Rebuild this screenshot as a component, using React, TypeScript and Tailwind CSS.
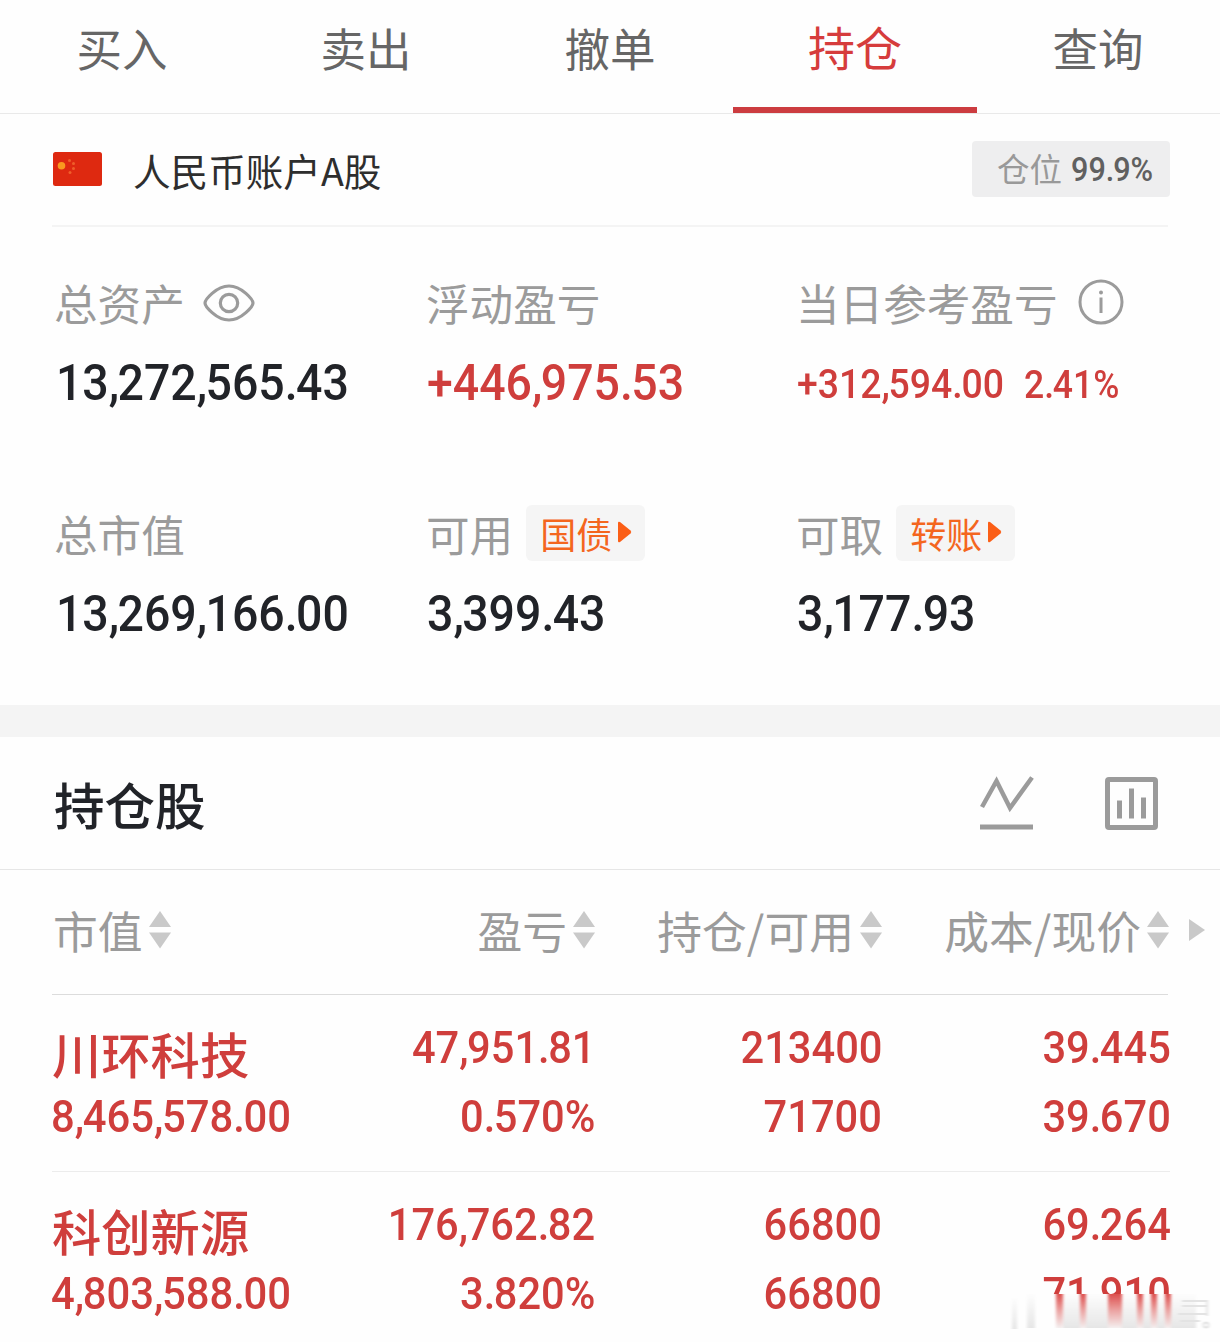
import React from 'react';
import { clsx } from 'clsx';

interface Holding {
  name: string;
  marketValue: string;
  profit: string;
  profitRate: string;
  shares: string;
  available: string;
  cost: string;
  price: string;
}

const TABS = ['买入', '卖出', '撤单', '持仓', '查询'];
const ACTIVE_TAB = '持仓';

const HOLDINGS: Holding[] = [
  {
    name: '川环科技',
    marketValue: '8,465,578.00',
    profit: '47,951.81',
    profitRate: '0.570%',
    shares: '213400',
    available: '71700',
    cost: '39.445',
    price: '39.670',
  },
  {
    name: '科创新源',
    marketValue: '4,803,588.00',
    profit: '176,762.82',
    profitRate: '3.820%',
    shares: '66800',
    available: '66800',
    cost: '69.264',
    price: '71.910',
  },
];

// Narrow DIN-like figures, with the separators pulled in
const Num: React.FC<{ children: string; className?: string }> = ({ children, className }) => (
  <span className={clsx('block w-max font-[Roboto,sans-serif] font-medium whitespace-nowrap', className)}>
    {children.split(/([.,])/).map((part, i) =>
      part === '.' || part === ',' ? (
        <span key={i} className="tracking-[-0.035em]">
          {part}
        </span>
      ) : (
        part
      )
    )}
  </span>
);

const SortIcon = () => (
  <svg className="ml-[6px] h-[38px] w-[22px] shrink-0" viewBox="0 0 22 38" fill="#c9c9c9">
    <path d="M11 0 L22 16 H0 Z" />
    <path d="M0 21.5 H22 L11 37.5 Z" />
  </svg>
);

const Flag = () => (
  <svg className="ml-px h-[34px] w-[49px] -translate-y-px" viewBox="0 0 49 34">
    <rect width="49" height="34" rx="2.500" fill="#de2910" />
    <circle cx="8.500" cy="13.800" r="3.800" fill="#f9991f" />
    <g fill="#ef5f2b">
      <circle cx="16.500" cy="8.500" r="1.500" />
      <circle cx="20.500" cy="11.500" r="1.500" />
      <circle cx="20.500" cy="16.500" r="1.500" />
      <circle cx="17" cy="20.500" r="1.500" />
    </g>
  </svg>
);

const EyeIcon = () => (
  <svg className="ml-[18px] h-[38px] w-[52px] translate-y-px" viewBox="0 0 52 38" fill="none" stroke="#9b9b9b" strokeWidth="3.200">
    <path d="M2 19 C2 16 13 2 26 2 C39 2 50 16 50 19 C50 22 39 36 26 36 C13 36 2 22 2 19 Z" />
    <circle cx="26" cy="19" r="8.700" />
  </svg>
);

const InfoIcon = () => (
  <svg className="ml-[20px] h-[46px] w-[46px]" viewBox="0 0 46 46" fill="none" stroke="#9b9b9b" strokeWidth="3">
    <circle cx="23" cy="23" r="21" />
    <path d="M23 18.500 V34" />
    <circle cx="23" cy="13.500" r="2" fill="#9b9b9b" stroke="none" />
  </svg>
);

const LinkTag: React.FC<{ label: string }> = ({ label }) => (
  <span className="ml-[13px] flex h-[56px] w-[119px] items-center rounded-[6px] bg-[#f5f5f5] pl-[14px] text-[36px] leading-[56px] text-[#f4661e]">
    {label}
    <svg className="ml-[6px] h-[22px] w-[14px] -translate-y-px" viewBox="0 0 14 22" fill="#fb5f17">
      <path d="M0 2 Q0 0 2 1 L12.500 9.500 Q14 11 12.500 12.500 L2 21 Q0 22 0 20 Z" />
    </svg>
  </span>
);

const Label: React.FC<{ text: string; children?: React.ReactNode }> = ({ text, children }) => (
  <div className="flex h-[60px] items-center text-[43.600px] leading-[60px] whitespace-nowrap text-[#9b9b9b]">
    <span className="-ml-px">{text}</span>
    {children}
  </div>
);

const big = 'mt-[21px] h-[60px] text-[50.500px] leading-[60px] origin-left scale-x-[0.920]';
const cell = 'text-[45px] leading-[60px] origin-right scale-x-[0.925]';

// Smudged strip in the corner over the last price
const Smudge = () => (
  <svg className="absolute right-0 bottom-0 h-[48px] w-[220px]" viewBox="0 0 220 48">
    <defs>
      <linearGradient id="fadeRed" x1="0" y1="0" x2="0" y2="1">
        <stop offset="0" stopColor="#dc4a48" />
        <stop offset="0.500" stopColor="#eba3a2" />
        <stop offset="1" stopColor="#f4efef" />
      </linearGradient>
      <linearGradient id="fadeGray" x1="0" y1="0" x2="0" y2="1">
        <stop offset="0" stopColor="#fdfdfd" />
        <stop offset="1" stopColor="#e6e6e6" />
      </linearGradient>
      <filter id="soft" x="-20%" y="-5%" width="140%" height="110%">
        <feGaussianBlur stdDeviation="1.400 0.300" />
      </filter>
    </defs>
    <rect width="220" height="48" fill="#fefefe" />
    <g filter="url(#soft)">
      <rect x="12" y="4" width="5" height="31" fill="url(#fadeGray)" />
      <rect x="27" y="0" width="8" height="34" fill="url(#fadeGray)" />
      <rect x="62" y="0" width="134" height="34" fill="url(#fadeGray)" />
    </g>
    <g fill="url(#fadeRed)" filter="url(#soft)">
      <rect x="56" y="-1" width="7" height="35" />
      <rect x="80" y="-1" width="6" height="35" />
      <rect x="108" y="-1" width="14" height="35" />
      <rect x="137" y="-1" width="6" height="35" />
      <rect x="151" y="-1" width="6" height="35" />
      <rect x="165" y="-1" width="6" height="35" />
    </g>
    <g stroke="#e3e3e3" strokeWidth="2" fill="none" filter="url(#soft)">
      <path d="M182 7 H206 M182 12 H206 M178 20 H206 M180 27 H200 M207 6 V22" />
      <circle cx="206" cy="31" r="2.500" />
    </g>
  </svg>
);

export default function App() {
  return (
    <div className="relative h-[1342px] w-[1220px] overflow-hidden bg-[#fefefe] font-['Noto_Sans_CJK_SC',sans-serif]">
      {/* Tabs */}
      <nav className="grid h-[114px] grid-cols-5 border-b border-[#e9e9e9]">
        {TABS.map((tab) => (
          <div
            key={tab}
            className={clsx(
              'h-[113px] text-center leading-[60px]',
              tab === ACTIVE_TAB
                ? 'translate-x-px border-b-[6px] border-[#cc3c40] pt-[16px] text-[47px] text-[#d63c3c]'
                : 'pt-[17px] text-[45.500px] text-[#666666]'
            )}
          >
            {tab}
          </div>
        ))}
      </nav>

      {/* Account */}
      <div className="mx-[52px] flex h-[113px] items-center border-b-2 border-[#f4f4f4]">
        <Flag />
        <span className="ml-[31px] text-[37.600px] leading-[56px] text-[#2e2e2e]">人民币账户A股</span>
        <div className="-mr-[2px] mb-[2px] ml-auto flex h-[56px] w-[198px] items-center rounded-[4px] bg-[#eeeeef] pl-[25px] text-[32.500px] text-[#999999]">
          仓位
          <Num className="ml-[9px] origin-left translate-y-px scale-x-[0.900] text-[34px] text-[#606060]">99.9%</Num>
        </div>
      </div>

      {/* Summary */}
      <section className="grid h-[478px] grid-cols-[372px_370px_1fr] grid-rows-[231px_1fr] pt-[45px] pl-[55px]">
        <div>
          <Label text="总资产">
            <EyeIcon />
          </Label>
          <Num className={clsx(big, 'pl-px text-[#212328]')}>13,272,565.43</Num>
        </div>
        <div>
          <Label text="浮动盈亏" />
          <Num className={clsx(big, 'text-[#cf3e3c]')}>+446,975.53</Num>
        </div>
        <div>
          <Label text="当日参考盈亏">
            <InfoIcon />
          </Label>
          <div className="mt-[23px] flex text-[#cf3e3c]">
            <Num className="origin-left scale-x-[0.935] text-[40px] leading-[60px]">+312,594.00</Num>
            <Num className="ml-[6px] origin-left scale-x-[0.935] text-[38px] leading-[60px]">2.41%</Num>
          </div>
        </div>
        <div>
          <Label text="总市值" />
          <Num className={clsx(big, 'pl-px text-[#212328]')}>13,269,166.00</Num>
        </div>
        <div>
          <Label text="可用">
            <LinkTag label="国债" />
          </Label>
          <Num className={clsx(big, 'text-[#212328]')}>3,399.43</Num>
        </div>
        <div>
          <Label text="可取">
            <LinkTag label="转账" />
          </Label>
          <Num className={clsx(big, 'text-[#212328]')}>3,177.93</Num>
        </div>
      </section>

      <div className="h-[32px] bg-[#f4f4f4]" />

      {/* Holdings title */}
      <div className="flex h-[133px] items-center border-b border-[#e6e6e6] pr-[61px] pl-[54px]">
        <h2 className="text-[50.500px] leading-[70px] font-medium text-[#212328]">持仓股</h2>
        <svg className="ml-auto h-[54px] w-[54px]" viewBox="0 0 54 54" fill="none" stroke="#9b9b9b" strokeWidth="4.500">
          <path d="M2 31 L16.500 5 L30 32 L52 1.500" />
          <path d="M0 51 H53" strokeWidth="5" />
        </svg>
        <svg className="ml-[71px] h-[54px] w-[54px]" viewBox="0 0 54 54" fill="none" stroke="#9b9b9b" strokeWidth="5">
          <rect x="2.500" y="3.500" width="48" height="48" rx="1.500" />
          <path d="M14.500 24.500 V42.500 M26.500 12.500 V42.500 M38.500 21.500 V42.500" />
        </svg>
      </div>

      {/* Table head */}
      <div className="ml-[52px] flex h-[124px] items-center pb-[4px] text-[44.800px] leading-[60px] whitespace-nowrap text-[#9b9b9b]">
        <div className="flex w-[255px] items-center pl-px">
          市值
          <SortIcon />
        </div>
        <div className="flex w-[288px] items-center justify-end">
          盈亏
          <SortIcon />
        </div>
        <div className="flex w-[287px] items-center justify-end">
          持仓/可用
          <SortIcon />
        </div>
        <div className="flex w-[287px] items-center justify-end">
          成本/现价
          <SortIcon />
        </div>
        <svg className="ml-[20px] h-[22px] w-[16px]" viewBox="0 0 16 22" fill="#c9c9c9">
          <path d="M0 0 L16 11 L0 22 Z" />
        </svg>
      </div>
      <div className="mx-[52px] h-px bg-[#dcdcdc]" />

      {/* Table rows */}
      {HOLDINGS.map((h) => (
        <div
          key={h.name}
          className="mr-[50px] ml-[52px] grid h-[177px] grid-cols-[255px_288px_287px_289px] border-b border-[#ececec] pt-[23px] text-[#cf3e3c]"
        >
          <div>
            <div className="h-[69px] pt-[5px] text-[49.300px] leading-[60px] font-medium">{h.name}</div>
            <Num className="-ml-px origin-left scale-x-[0.930] text-[45px] leading-[60px]">{h.marketValue}</Num>
          </div>
          {[
            [h.profit, h.profitRate],
            [h.shares, h.available],
            [h.cost, h.price],
          ].map(([top, bottom]) => (
            <div key={top} className="flex flex-col items-end gap-[9px]">
              <Num className={cell}>{top}</Num>
              <Num className={cell}>{bottom}</Num>
            </div>
          ))}
        </div>
      ))}

      <Smudge />
    </div>
  );
}
